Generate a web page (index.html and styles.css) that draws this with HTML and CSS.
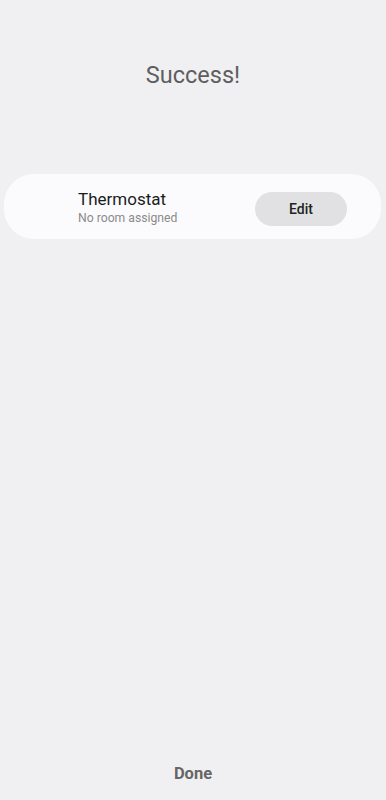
FILE: index.html
```html
<!DOCTYPE html>
<html>
<head>
<meta charset="utf-8">
<link rel="stylesheet" href="styles.css">
</head>
<body>
<div class="screen">
  <h1 class="title">Success!</h1>
  <div class="card">
    <div class="info">
      <div class="name">Thermostat</div>
      <div class="room">No room assigned</div>
    </div>
    <button class="edit">Edit</button>
  </div>
  <div class="spacer"></div>
  <div class="done">Done</div>
</div>
</body>
</html>
```
FILE: styles.css
```css
html, body {
  margin: 0;
  padding: 0;
  background: #f0f0f2;
  font-family: Roboto, "Noto Sans", sans-serif;
}
.screen {
  height: 800px;
  display: flex;
  flex-direction: column;
  box-sizing: border-box;
}
.title {
  margin: 60px 0 0;
  text-align: center;
  font-size: 23.5px;
  font-weight: 400;
  color: #5e5e5e;
  line-height: 30px;
}
.card {
  margin: 84px 5px 0 4px;
  height: 65px;
  background: #fbfbfd;
  border-radius: 30px;
  display: flex;
  align-items: center;
  padding: 0 34px 0 74px;
}
.info {
  flex: 1;
  display: flex;
  flex-direction: column;
  margin-top: 3px;
}
.name {
  font-size: 17px;
  color: #1c1c1c;
  line-height: 20px;
}
.room {
  font-size: 12.2px;
  color: #8b8b8b;
  line-height: 18px;
}
.edit {
  width: 92px;
  height: 34px;
  margin-top: 5px;
  border: none;
  border-radius: 17px;
  background: #e1e1e3;
  font-family: Roboto, "Noto Sans", sans-serif;
  font-size: 14px;
  font-weight: 500;
  color: #222;
  padding: 0;
}
.spacer {
  flex: 1;
}
.done {
  text-align: center;
  font-size: 16.5px;
  font-weight: 700;
  color: #666;
  line-height: 20px;
  margin-bottom: 16px;
}
```
